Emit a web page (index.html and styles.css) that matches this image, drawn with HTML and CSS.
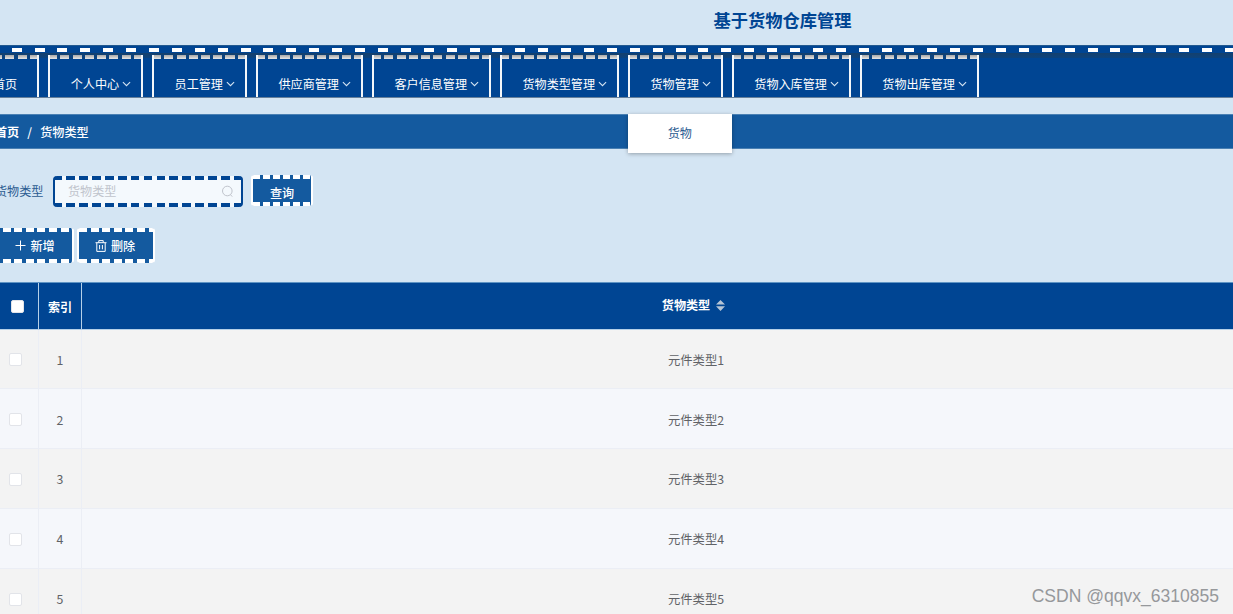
FILE: index.html
```
<!DOCTYPE html>
<html lang="zh-CN">
<head>
<meta charset="utf-8">
<title>基于货物仓库管理</title>
<link rel="stylesheet" href="styles.css">
</head>
<body>
<svg class="defs" width="0" height="0">
  <symbol id="chevron" viewBox="0 0 10 6"><path d="M1 .8 5 4.8 9 .8" fill="none" stroke="currentColor" stroke-width="1.2"/></symbol>
</svg>
<header class="title">基于货物仓库管理</header>
<nav class="nav">
  <div class="tab home">首页</div>
  <div class="tab">个人中心<svg class="chevron"><use href="#chevron"/></svg></div>
  <div class="tab">员工管理<svg class="chevron"><use href="#chevron"/></svg></div>
  <div class="tab w5">供应商管理<svg class="chevron"><use href="#chevron"/></svg></div>
  <div class="tab w6">客户信息管理<svg class="chevron"><use href="#chevron"/></svg></div>
  <div class="tab w6">货物类型管理<svg class="chevron"><use href="#chevron"/></svg></div>
  <div class="tab">货物管理<svg class="chevron"><use href="#chevron"/></svg>
    <div class="submenu">货物</div>
  </div>
  <div class="tab w6">货物入库管理<svg class="chevron"><use href="#chevron"/></svg></div>
  <div class="tab w6">货物出库管理<svg class="chevron"><use href="#chevron"/></svg></div>
</nav>
<div class="crumbs"><b>首页</b><span class="slash">/</span><span>货物类型</span></div>
<form class="search">
  <label>货物类型</label>
  <div class="field"><span>货物类型</span>
    <svg width="13" height="13" viewBox="0 0 13 13" fill="none" stroke="currentColor"><circle cx="6.3" cy="6" r="4.8"/><path d="m9.4 9.6 1.8 2"/></svg>
  </div>
  <div class="btn query">查询</div>
</form>
<div class="actions">
  <div class="btn add"><svg width="11" height="11" viewBox="0 0 11 11" fill="none" stroke="currentColor"><path d="M5.5.5v10M.5 5.5h10"/></svg>新增</div>
  <div class="btn del"><svg width="12" height="12" viewBox="0 0 12 12" fill="none" stroke="currentColor"><path d="M.5 2.7h11M3.8 2.5V.6h4.4v1.9M1.8 3v8.4h8.4V3M4.6 5v4.3M7.4 5v4.3"/></svg>删除</div>
</div>
<main class="table">
  <div class="row head"><div class="cell"><i class="box"></i></div><div class="cell">索引</div><div class="cell">货物类型<svg class="sort" width="9" height="11" viewBox="0 0 9 11" fill="currentColor"><path d="M4.5 0 9 4.4H0zM4.5 11 9 6.3H0z"/></svg></div></div>
  <div class="row"><div class="cell"><i class="box"></i></div><div class="cell">1</div><div class="cell">元件类型1</div></div>
  <div class="row even"><div class="cell"><i class="box"></i></div><div class="cell">2</div><div class="cell">元件类型2</div></div>
  <div class="row"><div class="cell"><i class="box"></i></div><div class="cell">3</div><div class="cell">元件类型3</div></div>
  <div class="row even"><div class="cell"><i class="box"></i></div><div class="cell">4</div><div class="cell">元件类型4</div></div>
  <div class="row"><div class="cell"><i class="box"></i></div><div class="cell">5</div><div class="cell">元件类型5</div></div>
</main>
<div class="watermark">CSDN @qqvx_6310855</div>
</body>
</html>
```
FILE: styles.css
```
* { box-sizing: border-box; }
body {
  margin: 0;
  width: 1233px;
  height: 614px;
  overflow: hidden;
  position: relative;
  background: #d4e5f3;
  font: 12.1px/18px "Noto Sans CJK SC", sans-serif;
  color: #606266;
}
.defs { position: absolute; }
.title {
  height: 45px;
  padding: 6px 0 0 332px;
  text-align: center;
  font-size: 17.25px;
  line-height: 27px;
  font-weight: 700;
  color: #004593;
}
.nav {
  height: 53px;
  padding-top: 9px;
  display: flex;
  gap: 8.6px;
  color: #fff;
  background:
    repeating-linear-gradient(to right, #fff 0 10px, transparent 10px 22.89px) -11.2px 2px / 1300px 4px no-repeat,
    linear-gradient(#15406c, #0b437f) 0 7px / 100% 5px no-repeat,
    #004593;
  border-top: 1px solid #22598f;
  border-bottom: 1px solid #66809b;
}
.tab {
  position: relative;
  flex: none;
  width: 95.3px;
  height: 42px;
  padding: 20px 0 0 20.7px;
  white-space: nowrap;
  border: solid #f4f7fa;
  border-width: 0 2px;
  background:
    repeating-linear-gradient(to right, transparent 0 9px, #0b437f 9px 12.25px) 0 0 / 140px 4px no-repeat border-box,
    linear-gradient(#a9a9a9, #e6e6e6) 0 0 / 100% 4px no-repeat border-box;
}
.tab.home { width: 95px; margin-left: -55.6px; padding-left: 46.6px; }
.tab.w5 { width: 107.4px; }
.tab.w6 { width: 119.4px; }
.chevron { width: 9px; height: 6px; margin: 0 0 2px 3px; color: #d4e5f3; }
.submenu {
  position: absolute;
  left: -2px;
  top: 59px;
  width: 104px;
  height: 39px;
  line-height: 38px;
  text-align: center;
  color: #2c5c91;
  background: #fff;
  box-shadow: 0 1px 4px rgba(0, 0, 0, .3);
}
.crumbs {
  height: 35px;
  margin-top: 16px;
  padding-top: 8px;
  display: flex;
  color: #fff;
  background: #145a9f;
  border-top: 1px solid #4a80b3;
  border-bottom: 1px solid #4a80b3;
}
.crumbs b { margin-left: -5px; }
.crumbs span { font-weight: 500; }
.slash { width: 21px; text-align: center; }
.search { display: flex; height: 32px; margin-top: 26px; }
.search label { width: 58px; margin-left: -5px; padding-top: 7px; color: #2c5c91; flex: none; }
.field {
  width: 190px;
  height: 31px;
  margin-top: 1px;
  padding: 0 7px 1px 13px;
  display: flex;
  align-items: center;
  justify-content: space-between;
  color: #c0c4cc;
  border: solid #004593;
  border-width: 0 2px;
  border-radius: 4px;
  background:
    repeating-linear-gradient(to right, #004593 0 8.7px, transparent 8.7px 12.9px) -1.7px 0 / 200px 4px no-repeat,
    repeating-linear-gradient(to right, #004593 0 8.7px, transparent 8.7px 12.9px) -1.7px 100% / 200px 4px no-repeat,
    #f4f9fd;
}
.btn {
  flex: none;
  height: 35px;
  display: flex;
  align-items: center;
  justify-content: center;
  color: #fff;
  font-weight: 500;
  border: solid #fff;
  border-width: 0 2px;
  border-radius: 3px;
  background:
    repeating-linear-gradient(to right, #fff 0 8px, transparent 8px 11.6px) 0 0 / 100% 4px no-repeat,
    repeating-linear-gradient(to right, #fff 0 8px, transparent 8px 11.6px) 0 100% / 100% 4px no-repeat,
    #145a9f;
}
.query {
  width: 62px;
  height: 31px;
  margin-left: 8px;
  padding-top: 5px;
  background:
    repeating-linear-gradient(to right, #fff 0 6.6px, transparent 6.6px 10px) 0 0 / 100% 4px no-repeat,
    repeating-linear-gradient(to right, #fff 0 6.6px, transparent 6.6px 10px) 0 100% / 100% 4px no-repeat,
    #145a9f;
}
.actions { display: flex; gap: 3px; margin-top: 21px; height: 54px; }
.actions .btn { gap: 4px; }
.add { width: 85px; margin-left: -11px; padding-left: 7px; }
.del { width: 78px; padding-right: 2px; }
.row { display: flex; height: 59.8px; background: #f3f3f3; }
.row.even { background: #f5f7fb; }
.cell {
  display: flex;
  align-items: center;
  justify-content: center;
  padding-top: 2px;
  font-size: 12.3px;
  border-bottom: 1px solid #ebeef5;
}
.cell:nth-child(1) { width: 39px; padding-right: 8px; border-right: 1px solid #ebeef5; }
.cell:nth-child(2) { width: 43px; border-right: 1px solid #ebeef5; }
.cell:nth-child(3) { flex: 1; padding-left: 82px; padding-right: 5px; }
.head { height: 47.5px; color: #fff; font-weight: 700; background: #004593; border-top: 1px solid #5f94c4; }
.head .cell { border-color: #b5d0e8; font-size: 12.1px; }
.head .cell:nth-child(1) { padding-right: 4px; }
.head .cell:nth-child(3) { padding: 0 10px 1px 82px; }
.box { width: 13px; height: 13px; background: #fff; border: 1px solid #e2e4e9; border-radius: 2px; }
.sort { margin-left: 6px; color: #b6c5d6; }
.watermark {
  position: absolute;
  right: 14px;
  bottom: 8px;
  font: 17.55px/20px "Liberation Sans", sans-serif;
  color: #96989b;
}
```
